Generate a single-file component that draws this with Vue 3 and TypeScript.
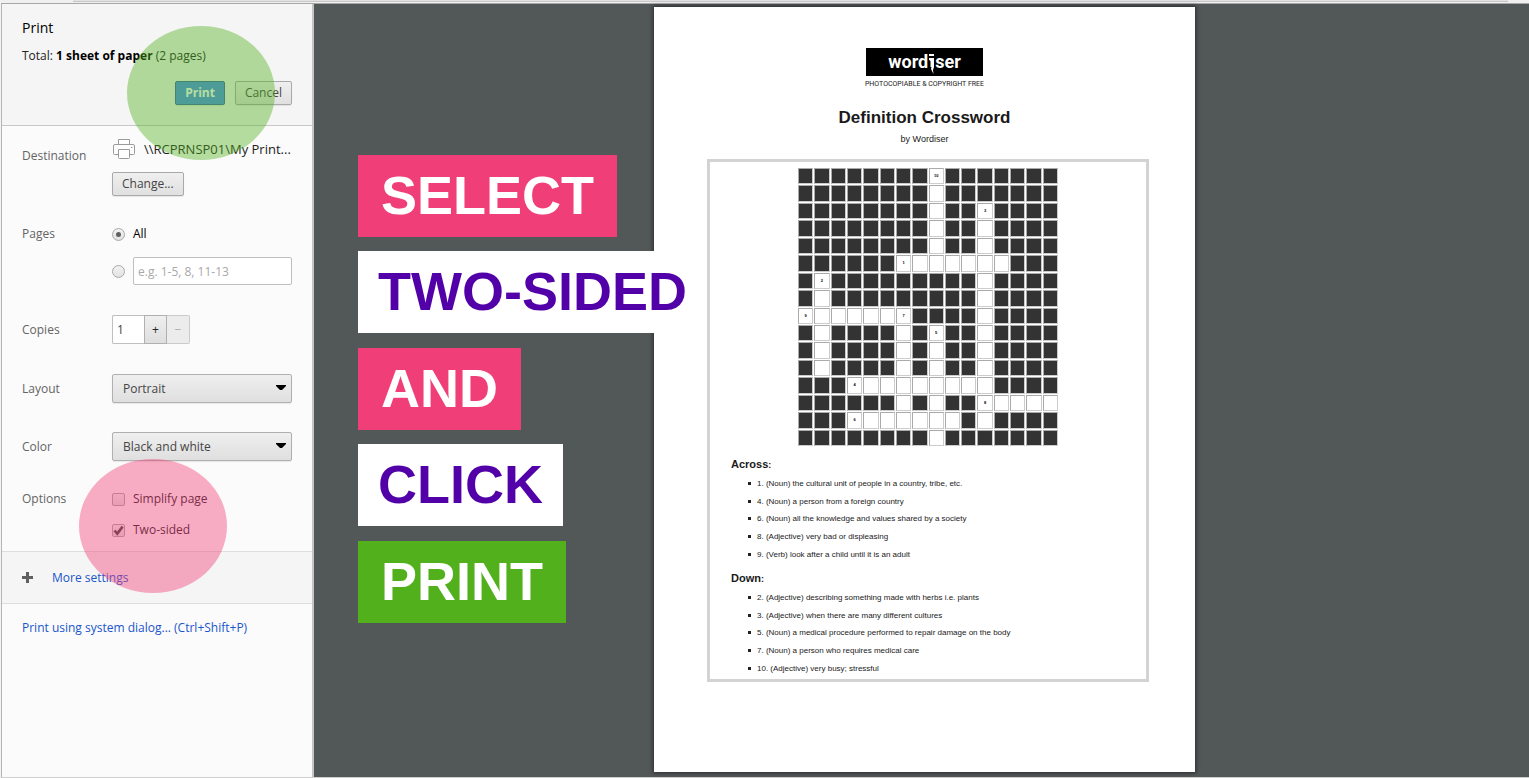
<script setup lang="ts">
import { computed, ref } from 'vue'

interface Clue {
  id: number
  text: string
}

interface Cell {
  open: boolean
  label: string
}

const pages = ref<'all' | 'range'>('all')
const range = ref('')
const copies = ref(1)
const layout = ref('Portrait')
const color = ref('Black and white')
const simplify = ref(false)
const twoSided = ref(true)

const pattern: string[] = [
  '########.#######',
  '########.#######',
  '########.##.####',
  '########.##.####',
  '########.##.####',
  '######.......###',
  '#.#########.####',
  '#.#########.####',
  '.......####.####',
  '#.####.#.##.####',
  '#.####.#.##.####',
  '#.####.#.##.####',
  '###.........####',
  '######.#.##.....',
  '###.......#.####',
  '########.#######',
]

const labels: Record<string, string> = {
  '0-8': '10',
  '2-11': '3',
  '5-6': '1',
  '6-1': '2',
  '8-0': '9',
  '8-6': '7',
  '9-8': '5',
  '12-3': '4',
  '13-11': '8',
  '14-3': '6',
}

const cells = computed<Cell[]>(() =>
  pattern.flatMap((row, r) =>
    [...row].map((ch, c) => ({ open: ch === '.', label: labels[`${r}-${c}`] ?? '' })),
  ),
)

const across: Clue[] = [
  { id: 1, text: '(Noun) the cultural unit of people in a country, tribe, etc.' },
  { id: 4, text: '(Noun) a person from a foreign country' },
  { id: 6, text: '(Noun) all the knowledge and values shared by a society' },
  { id: 8, text: '(Adjective) very bad or displeasing' },
  { id: 9, text: '(Verb) look after a child until it is an adult' },
]

const down: Clue[] = [
  { id: 2, text: '(Adjective) describing something made with herbs i.e. plants' },
  { id: 3, text: '(Adjective) when there are many different cultures' },
  { id: 5, text: '(Noun) a medical procedure performed to repair damage on the body' },
  { id: 7, text: '(Noun) a person who requires medical care' },
  { id: 10, text: '(Adjective) very busy; stressful' },
]

const steps = [
  { text: 'SELECT', tone: 'pink' },
  { text: 'TWO-SIDED', tone: 'white' },
  { text: 'AND', tone: 'pink' },
  { text: 'CLICK', tone: 'white' },
  { text: 'PRINT', tone: 'green' },
]
</script>

<template>
  <div class="window">
    <div class="strip"><span class="strip-line"></span></div>
    <div class="dialog">
      <aside class="sidebar">
        <header class="head">
          <h1>Print</h1>
          <p>Total: <b>1 sheet of paper</b> (2 pages)</p>
          <div class="actions">
            <button class="btn primary" type="button">Print</button>
            <button class="btn" type="button">Cancel</button>
          </div>
        </header>

        <section class="row destination">
          <span class="name">Destination</span>
          <div class="field">
            <div class="printer">
              <svg width="24" height="22" viewBox="0 0 24 22" fill="#fdfdfd" stroke="#9a9a9a" aria-hidden="true">
                <path d="M6.500 6.500V1.500h11v5" />
                <path d="M6 16.500H2.500a1 1 0 0 1-1-1V8a1.500 1.500 0 0 1 1.500-1.500h18A1.500 1.500 0 0 1 22.500 8v7.500a1 1 0 0 1-1 1H18" />
                <path d="M6.500 11.500h11v8a1 1 0 0 1-1 1h-9a1 1 0 0 1-1-1z" />
                <path d="M19 9.500h1.500" />
              </svg>
              <span>\\RCPRNSP01\My Print...</span>
            </div>
            <button class="btn" type="button">Change...</button>
          </div>
        </section>

        <section class="row pages">
          <span class="name">Pages</span>
          <div class="field">
            <label class="choice all"><input v-model="pages" type="radio" name="pages" value="all" />All</label>
            <div class="choice">
              <input v-model="pages" type="radio" name="pages" value="range" aria-label="Page range" />
              <input v-model="range" class="text" type="text" placeholder="e.g. 1-5, 8, 11-13" aria-label="Pages to print" />
            </div>
          </div>
        </section>

        <section class="row copies">
          <label class="name" for="copies">Copies</label>
          <div class="field stepper">
            <input id="copies" v-model="copies" class="text" type="text" />
            <button type="button" aria-label="More copies" @click="copies++">+</button>
            <button type="button" aria-label="Fewer copies" :disabled="copies <= 1" @click="copies--">−</button>
          </div>
        </section>

        <section class="row layout">
          <label class="name" for="layout">Layout</label>
          <div class="field drop">
            <select id="layout" v-model="layout">
              <option>Portrait</option>
              <option>Landscape</option>
            </select>
            <svg width="10" height="5" viewBox="0 0 10 5" aria-hidden="true"><path d="M0 0h10v1L6 5H4L0 1z" /></svg>
          </div>
        </section>

        <section class="row color">
          <label class="name" for="color">Color</label>
          <div class="field drop">
            <select id="color" v-model="color">
              <option>Black and white</option>
              <option>Color</option>
            </select>
            <svg width="10" height="5" viewBox="0 0 10 5" aria-hidden="true"><path d="M0 0h10v1L6 5H4L0 1z" /></svg>
          </div>
        </section>

        <section class="row options">
          <span class="name">Options</span>
          <div class="field checks">
            <label class="choice"><input v-model="simplify" type="checkbox" />Simplify page</label>
            <label class="choice">
              <span class="box">
                <input v-model="twoSided" type="checkbox" />
                <svg v-if="twoSided" width="11" height="11" viewBox="0 0 11 11" fill="none" stroke="#444" stroke-width="2.600" aria-hidden="true">
                  <path d="M1.500 5.500L4.300 8.600L9.600 1.600" />
                </svg>
              </span>
              Two-sided
            </label>
          </div>
        </section>

        <div class="more">
          <svg width="11" height="11" viewBox="0 0 11 11" fill="#606060" aria-hidden="true"><path d="M4 0h3v4h4v3H7v4H4V7H0V4h4z" /></svg>
          <a href="#">More settings</a>
        </div>
        <div class="system"><a href="#">Print using system dialog... (Ctrl+Shift+P)</a></div>

        <span class="spot spot-green"></span>
        <span class="spot spot-pink"></span>
      </aside>

      <main class="preview">
        <article class="sheet">
          <div class="logo">
            <div class="logo-mark">
              <span>word</span>
              <svg width="7" height="28" viewBox="0 0 7 28" fill="#fff" aria-hidden="true">
                <path d="M1 6h5v2H1zM1 10h5v9l-1 3 .5 4L3 21l.5-2H2.500v-6L1 12z" />
              </svg>
              <span>ser</span>
            </div>
            <small>PHOTOCOPIABLE &amp; COPYRIGHT FREE</small>
          </div>
          <h2>Definition Crossword</h2>
          <p class="by">by Wordiser</p>
          <div class="frame">
            <div class="grid">
              <span v-for="(cell, i) in cells" :key="i" class="cell" :class="{ open: cell.open }">{{ cell.label }}</span>
            </div>
            <h3>Across<span>:</span></h3>
            <ul>
              <li v-for="clue in across" :key="clue.id">{{ clue.id }}. {{ clue.text }}</li>
            </ul>
            <h3>Down<span>:</span></h3>
            <ul>
              <li v-for="clue in down" :key="clue.id">{{ clue.id }}. {{ clue.text }}</li>
            </ul>
          </div>
        </article>
        <div class="steps">
          <strong v-for="step in steps" :key="step.text" :class="step.tone">{{ step.text }}</strong>
        </div>
      </main>
    </div>
  </div>
</template>

<style>
body {
  margin: 0;
  background: #f4f4f4;
}
</style>

<style scoped>
* {
  box-sizing: border-box;
}

.window {
  min-height: 100vh;
  display: flex;
  flex-direction: column;
  padding-left: 1px;
  font: 12px/16px "Open Sans", "Noto Sans", sans-serif;
  color: #222;
}

h1,
h2,
h3,
p,
ul {
  margin: 0;
  padding: 0;
}

.strip {
  height: 4px;
  padding: 0 21px 0 72px;
  background: #f0f0f0;
  border-bottom: 1px solid #a8a8a8;
}

.strip-line {
  display: block;
  height: 2px;
  background: #e2e2e2;
  border-bottom: 1px solid #c8c8c8;
}

.dialog {
  flex: 1;
  display: flex;
  border-left: 1px solid #b5b5b5;
  border-bottom: 1px solid #cfcfcf;
}

.sidebar {
  position: relative;
  flex: none;
  width: 312px;
  background: #fbfbfb;
  border-right: 2px solid #c4c4c4;
}

.head {
  padding: 14px 20px 20px;
  background: #f5f5f5;
  border-bottom: 1px solid #c8c8c8;
}

.head h1 {
  font-size: 14px;
  line-height: 20px;
  font-weight: 400;
  color: #000;
}

.head p {
  margin-top: 10px;
  color: #222;
}

.head b {
  color: #000;
}

.actions {
  display: flex;
  justify-content: flex-end;
  gap: 10px;
  margin-top: 17px;
}

.btn {
  height: 24px;
  padding: 0 9px;
  font: inherit;
  color: #444;
  background: linear-gradient(#efefef, #e0e0e0);
  border: 1px solid #a9a9a9;
  border-radius: 2px;
  box-shadow: 0 1px 1px rgba(0, 0, 0, 0.08);
}

.btn.primary {
  color: #fff;
  font-weight: 700;
  background: #4a8df0;
  border-color: #3c68a8;
}

.row {
  display: flex;
  padding: 0 20px;
}

.name {
  flex: none;
  width: 90px;
  color: #646464;
}

.field {
  flex: 1;
  min-width: 0;
}

.destination {
  padding-top: 11px;
}

.destination .name {
  padding-top: 11px;
}

.printer {
  display: flex;
  align-items: center;
  gap: 8px;
  height: 24px;
  margin-bottom: 11px;
  font-size: 13px;
  white-space: nowrap;
}

.pages {
  margin-top: 30px;
}

.choice {
  display: flex;
  align-items: center;
  gap: 8px;
}

.choice.all {
  margin-bottom: 15px;
  color: #000;
}

input[type='radio'],
input[type='checkbox'] {
  appearance: none;
  flex: none;
  display: grid;
  place-items: center;
  width: 13px;
  height: 13px;
  margin: 0;
  background: linear-gradient(#f2f2f2, #e2e2e2);
  border: 1px solid #a9a9a9;
  border-radius: 2px;
}

input[type='radio'] {
  border-radius: 50%;
}

input[type='radio']:checked::before {
  content: '';
  width: 5px;
  height: 5px;
  border-radius: 50%;
  background: #606060;
}

.text {
  min-width: 0;
  width: 100%;
  height: 28px;
  padding: 0 4px;
  font: inherit;
  color: #444;
  background: #fff;
  border: 1px solid #bfbfbf;
  border-radius: 2px;
}

.text::placeholder {
  color: #a9a9a9;
  opacity: 1;
}

.copies {
  margin-top: 30px;
  align-items: center;
}

.stepper {
  display: flex;
}

.stepper .text {
  width: 32px;
  height: 29px;
  border-right: 0;
  border-radius: 2px 0 0 2px;
}

.stepper button {
  width: 23px;
  height: 29px;
  padding: 0;
  font: inherit;
  color: #222;
  background: linear-gradient(#efefef, #dedede);
  border: 1px solid #b0b0b0;
}

.stepper button:disabled {
  color: #aaa;
  background: #ececec;
  border-color: #cbcbcb;
  border-left: 0;
  border-radius: 0 2px 2px 0;
}

.layout,
.color {
  align-items: center;
}

.layout {
  margin-top: 30px;
}

.color {
  margin-top: 29px;
}

.drop {
  position: relative;
}

.drop select {
  appearance: none;
  display: block;
  width: 100%;
  height: 29px;
  padding: 0 10px;
  font: inherit;
  color: #444;
  background: linear-gradient(#efefef, #dfdfdf);
  border: 1px solid #b0b0b0;
  border-radius: 2px;
  box-shadow: 0 1px 1px rgba(0, 0, 0, 0.08);
}

.drop svg {
  position: absolute;
  top: 11px;
  right: 6px;
  pointer-events: none;
}

.options {
  margin-top: 30px;
  padding-bottom: 13px;
}

.checks {
  display: grid;
  gap: 15px;
}

.box {
  position: relative;
  display: flex;
}

.box svg {
  position: absolute;
  top: 1px;
  left: 1px;
  pointer-events: none;
}

.more {
  display: flex;
  align-items: center;
  gap: 19px;
  height: 53px;
  padding: 0 20px;
  background: #f5f5f5;
  border-top: 1px solid #dedede;
  border-bottom: 1px solid #dedede;
}

.system {
  padding: 16px 20px;
}

a {
  color: #1a55cc;
  text-decoration: none;
}

.spot {
  position: absolute;
  width: 148px;
  height: 134px;
  border-radius: 50%;
  pointer-events: none;
}

.spot-green {
  top: 22px;
  left: 125px;
  background: rgba(82, 176, 29, 0.42);
}

.spot-pink {
  top: 455px;
  left: 77px;
  background: rgba(240, 61, 120, 0.42);
}

.preview {
  position: relative;
  flex: 1;
  min-width: 0;
  display: flex;
  justify-content: center;
  align-items: stretch;
  padding: 3px 0 5px;
  background: #525757;
}

.sheet {
  width: 541px;
  margin-left: 6px;
  padding: 41px 46px 0 53px;
  background: #fff;
  box-shadow: 0 0 4px 1px rgba(0, 0, 0, 0.5);
  font-family: "Liberation Sans", Arial, sans-serif;
  color: #1a1a1a;
}

.logo,
.sheet h2,
.by {
  margin-right: 7px;
  text-align: center;
}

.logo {
  display: flex;
  flex-direction: column;
  align-items: center;
}

.logo-mark {
  display: flex;
  justify-content: center;
  align-items: center;
  width: 117px;
  height: 28px;
  background: #000;
  color: #fff;
  font: 700 18px/28px Roboto, sans-serif;
}

.logo small {
  margin-top: 4px;
  font: 7px/8px Roboto, sans-serif;
  color: #222;
}

.sheet h2 {
  margin-top: 19px;
  font-size: 17px;
  line-height: 22px;
}

.by {
  margin-top: 4px;
  font-size: 9px;
  line-height: 12px;
}

.frame {
  margin-top: 14px;
  padding: 6px 21px 2px;
  border: 3px solid #d3d3d3;
}

.grid {
  display: grid;
  grid-template-columns: repeat(16, 1fr);
  grid-template-rows: repeat(16, 1fr);
  gap: 1px;
  width: 260px;
  height: 278px;
  margin: 0 auto;
}

.cell {
  display: flex;
  align-items: center;
  justify-content: center;
  min-width: 0;
  min-height: 0;
  font-size: 4px;
  line-height: 6px;
  font-weight: 700;
  color: #000;
  background: #333;
  border: 1px solid #aaa;
  border-right-color: #ccc;
  border-bottom-color: #ccc;
}

.cell.open {
  background: #fff;
}

.frame h3 {
  margin-top: 11px;
  font-size: 11px;
  line-height: 14px;
}

.frame ul + h3 {
  margin-top: 8px;
}

.frame h3 span {
  font-size: 9px;
}

.frame ul {
  display: grid;
  grid-template-rows: repeat(5, 1fr);
  height: 88px;
  margin-top: 3px;
  padding-left: 17px;
  list-style: none;
  font-size: 8px;
  line-height: 17px;
}

.frame li {
  display: flex;
  align-items: center;
  gap: 6px;
}

.frame li::before {
  content: '';
  width: 3px;
  height: 3px;
  background: #222;
}

.steps {
  position: absolute;
  top: 151px;
  left: 44px;
  display: flex;
  flex-direction: column;
  align-items: flex-start;
}

.steps strong {
  padding: 0 23px 2px;
  font: 700 54px/80px "Liberation Sans", Arial, sans-serif;
  color: #fff;
}

.steps .pink {
  background: #f03e79;
}

.steps .green {
  background: #52b01d;
}

.steps .white {
  margin: 14px 0 15px;
  padding: 0 20px 2px;
  color: #5200a8;
  background: #fff;
}
</style>
